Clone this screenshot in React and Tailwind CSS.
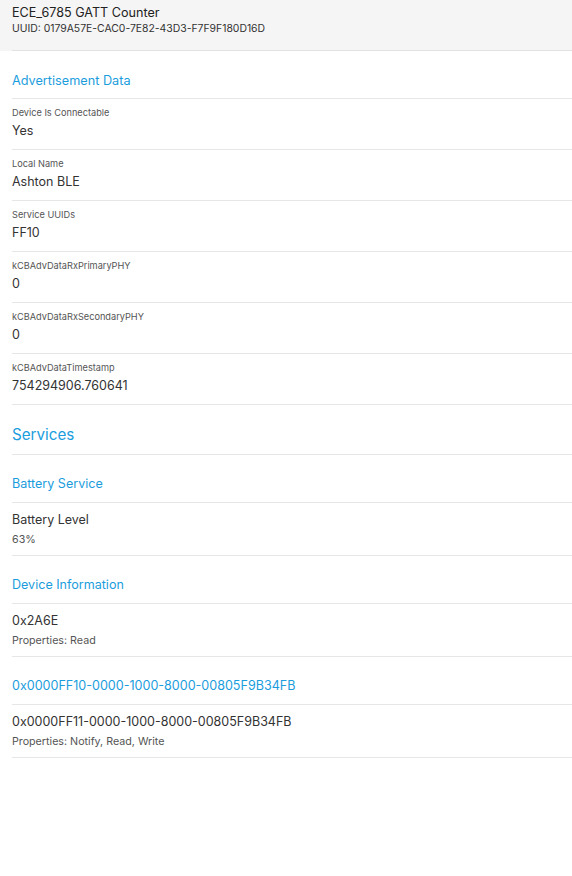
export default function App() {
  const adv = [
    ["Device Is Connectable", "Yes"],
    ["Local Name", "Ashton BLE"],
    ["Service UUIDs", "FF10"],
    ["kCBAdvDataRxPrimaryPHY", "0"],
    ["kCBAdvDataRxSecondaryPHY", "0"],
    ["kCBAdvDataTimestamp", "754294906.760641"],
  ];
  const services = [
    { name: "Battery Service", chars: [["Battery Level", "63%"]] },
    { name: "Device Information", chars: [["0x2A6E", "Properties: Read"]] },
    {
      name: "0x0000FF10-0000-1000-8000-00805F9B34FB",
      chars: [["0x0000FF11-0000-1000-8000-00805F9B34FB", "Properties: Notify, Read, Write"]],
    },
  ];
  return (
    <div
      className="min-h-[876px] w-full bg-white text-[#333333]"
      style={{ fontFamily: 'Inter, "Noto Sans", sans-serif' }}
    >
      <div className="bg-[#f5f5f5]">
        <div className="ml-3 h-[51px] border-b border-[#e2e2e2] pt-[4px]">
          <div className="text-[12.6px] leading-[18px] text-[#222222]">ECE_6785 GATT Counter</div>
          <div className="text-[10.4px] leading-[14px] text-[#333333]">UUID: 0179A57E-CAC0-7E82-43D3-F7F9F180D16D</div>
        </div>
      </div>
      <div className="ml-3 border-b border-[#e6e6e6] pt-[20px] pb-[7px]">
        <div className="text-[12.7px] leading-[20px] text-[#1b9ddd]">Advertisement Data</div>
      </div>
      {adv.map(([k, v]) => (
        <div key={k} className="ml-3 border-b border-[#e6e6e6] pt-[6px] pb-[8px]">
          <div className="text-[9.2px] leading-[15px] text-[#555555]">{k}</div>
          <div className="mt-[1px] text-[12.5px] leading-[20px] text-[#333333]">{v}</div>
        </div>
      ))}
      <div className="ml-3 border-b border-[#e6e6e6] pt-[19px] pb-[8px]">
        <div className="text-[15.2px] leading-[22px] text-[#1b9ddd]">Services</div>
      </div>
      {services.map((s) => (
        <div key={s.name}>
          <div className="ml-3 border-b border-[#e6e6e6] pt-[19px] pb-[8px]">
            <div className="text-[12.55px] leading-[20px] text-[#1b9ddd]">{s.name}</div>
          </div>
          {s.chars.map(([n, p]) => (
            <div key={n} className="ml-3 border-b border-[#e6e6e6] pt-[7px] pb-[8px]">
              <div className="text-[12.5px] leading-[20px] text-[#333333]">{n}</div>
              <div className="mt-[2px] text-[10.7px] leading-[15px] text-[#555555]">{p}</div>
            </div>
          ))}
        </div>
      ))}
    </div>
  );
}
